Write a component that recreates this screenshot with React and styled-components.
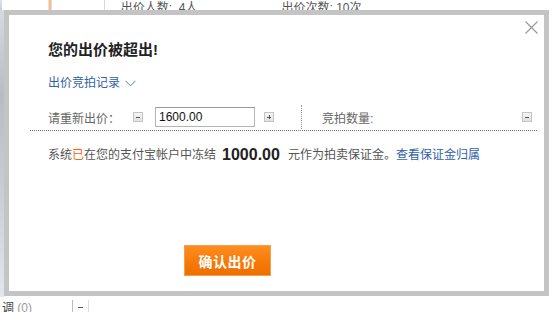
import React from "react";
import styled, { createGlobalStyle } from "styled-components";

const Global = createGlobalStyle`
  html, body { margin: 0; padding: 0; background: #fff; }
  body { font-family: "Liberation Sans", "Noto Sans CJK SC", sans-serif; }
`;

const Page = styled.div`
  position: relative;
  width: 558px;
  height: 312px;
  overflow: hidden;
  background: #fff;
  display: flex;
  flex-direction: column;
`;

const TopStats = styled.div`
  height: 10px;
  overflow: hidden;
  display: flex;
  align-items: flex-end;
  position: relative;
`;

const Edge = styled.div`
  width: 4px;
  align-self: stretch;
  background: linear-gradient(180deg, #dfe3e8, #c9ccd2);
`;

const Glow = styled.div`
  width: 10px;
  height: 10px;
  margin-left: 46px;
  background: linear-gradient(90deg, #f6efe4, #e9b47a, #f5e8d8);
`;

const VLine = styled.div`
  width: 1px;
  align-self: stretch;
  background: #d8d8d8;
  margin-left: ${(p) => p.$ml}px;
`;

const Stat = styled.span`
  font-size: 12px;
  line-height: 14px;
  color: #555;
  white-space: nowrap;
  margin-left: ${(p) => p.$ml}px;
  margin-bottom: -5px;
`;

const Middle = styled.div`
  flex: 1;
  display: flex;
`;

const LeftStrip = styled.div`
  width: 4px;
  background: linear-gradient(180deg, #d6dae0 0%, #b9bcc0 30%, #c8cbd0 60%, #e3e6ea 100%);
`;

const BottomBar = styled.div`
  height: 15px;
  overflow: hidden;
  display: flex;
  align-items: flex-start;
`;

const BottomText = styled.span`
  font-size: 12px;
  line-height: 14px;
  color: #444;
  margin-top: 4px;
  margin-left: 2px;
  white-space: nowrap;
`;

const Muted = styled.span`
  color: #999;
`;

const BottomBox = styled.div`
  margin-left: 40px;
  width: 17px;
  height: 20px;
  margin-top: 3px;
  border-left: 1px solid #bbb;
  border-right: 1px solid #ddd;
  display: flex;
  justify-content: center;
  padding-top: 7px;
  box-sizing: border-box;
  &::after {
    content: "";
    width: 5px;
    height: 1px;
    background: #555;
  }
`;

const Modal = styled.div`
  position: absolute;
  left: 4px;
  top: 10px;
  width: 545px;
  height: 286px;
  box-sizing: border-box;
  border: 5px solid #c4c4c4;
  background: #fff;
  display: flex;
  flex-direction: column;
  padding: 26px 7px 15px 21px;
`;

const Close = styled.button`
  position: absolute;
  right: 5px;
  top: 5px;
  width: 15px;
  height: 15px;
  padding: 0;
  border: 0;
  background: none;
  cursor: pointer;
  display: flex;
  align-items: center;
  justify-content: center;
`;

const Title = styled.h2`
  margin: 0;
  padding-left: 18px;
  font-size: 15px;
  line-height: 18px;
  font-weight: bold;
  color: #222;
`;

const RecordLink = styled.a`
  margin-top: 15px;
  padding-left: 18px;
  font-size: 12px;
  line-height: 18px;
  color: #2f62a6;
  text-decoration: none;
  display: flex;
  align-items: center;
  gap: 5px;
`;

const BidRow = styled.div`
  margin-top: 12px;
  height: 26px;
  padding: 0 5px 0 18px;
  border-bottom: 1px dotted #777;
  display: flex;
  align-items: center;
`;

const Label = styled.span`
  font-size: 12px;
  color: #666;
  white-space: nowrap;
  width: ${(p) => p.$w}px;
`;

const Step = styled.button`
  width: 10px;
  height: 10px;
  padding: 0;
  box-sizing: border-box;
  border: 1px solid #c4c4c4;
  background: linear-gradient(180deg, #f6f6f6, #e0e0e0);
  position: relative;
  margin-left: ${(p) => p.$ml || 0}px;
  &::before {
    content: "";
    position: absolute;
    left: 2px;
    top: 3.5px;
    width: 4px;
    height: 1px;
    background: #555;
  }
  &::after {
    content: "";
    display: ${(p) => (p.$plus ? "block" : "none")};
    position: absolute;
    left: 3.5px;
    top: 2px;
    width: 1px;
    height: 4px;
    background: #555;
  }
`;

const PriceInput = styled.input`
  width: 100px;
  height: 20px;
  box-sizing: border-box;
  margin-left: 12px;
  border: 1px solid #b5b5b5;
  border-top-color: #999;
  padding: 0 3px;
  font-family: "Liberation Sans", sans-serif;
  font-size: 12px;
  color: #111;
  outline: none;
`;

const Divider = styled.div`
  width: 0;
  height: 24px;
  border-left: 1px dotted #999;
  margin: 0 20px 0 27px;
`;

const Spacer = styled.div`
  flex: 1;
`;

const Notice = styled.p`
  margin: 14px 0 0;
  padding-left: 18px;
  font-size: 12px;
  line-height: 20px;
  color: #555;
  display: flex;
  align-items: center;
  white-space: nowrap;
`;

const Hi = styled.span`
  color: #f26a10;
`;

const Amount = styled.strong`
  font-family: "Liberation Sans", sans-serif;
  font-size: 16px;
  font-weight: bold;
  color: #222;
  margin: 0 8px 0 6px;
`;

const TextLink = styled.a`
  color: #2f62a6;
  text-decoration: none;
`;

const Footer = styled.div`
  margin-top: auto;
  padding-left: 154px;
  display: flex;
`;

const Confirm = styled.button`
  width: 87px;
  height: 31px;
  box-sizing: border-box;
  border: 1px solid #f0a050;
  background: linear-gradient(180deg, #ff8d1f 0%, #f57a0a 55%, #ee6f00 100%);
  color: #fff;
  font-family: "Noto Sans CJK SC", sans-serif;
  font-size: 14px;
  font-weight: bold;
  letter-spacing: 0.5px;
  padding: 0;
  cursor: pointer;
`;

export default function App() {
  return (
    <>
      <Global />
      <Page>
        <TopStats>
          <Edge />
          <Glow />
          <VLine $ml={52} />
          <Stat $ml={16}>出价人数:&nbsp;&nbsp;4人</Stat>
          <Stat $ml={84}>出价次数:&nbsp;10次</Stat>
          <VLine $ml={196} />
        </TopStats>
        <Middle>
          <LeftStrip />
        </Middle>
        <BottomBar>
          <BottomText>
            调 <Muted>(0)</Muted>
          </BottomText>
          <BottomBox />
        </BottomBar>

        <Modal>
          <Close aria-label="关闭">
            <svg width="13" height="13" viewBox="0 0 13 13">
              <path d="M0.5 0.5 L12.5 12.5 M12.5 0.5 L0.5 12.5" stroke="#9a9a9a" strokeWidth="1.2" fill="none" />
            </svg>
          </Close>
          <Title>您的出价被超出!</Title>
          <RecordLink href="#">
            出价竞拍记录
            <svg width="11" height="7" viewBox="0 0 11 7">
              <path d="M0.5 0.8 L5.5 5.8 L10.5 0.8" stroke="#5a7fb5" strokeWidth="1" fill="none" />
            </svg>
          </RecordLink>
          <BidRow>
            <Label $w={85}>请重新出价：</Label>
            <Step aria-label="减少" />
            <PriceInput defaultValue="1600.00" />
            <Step $plus $ml={9} aria-label="增加" />
            <Divider />
            <Label>竞拍数量:</Label>
            <Spacer />
            <Step aria-label="减少数量" />
          </BidRow>
          <Notice>
            系统<Hi>已</Hi>在您的支付宝帐户中冻结
            <Amount>1000.00</Amount>
            元作为拍卖保证金。
            <TextLink href="#">查看保证金归属</TextLink>
          </Notice>
          <Footer>
            <Confirm>确认出价</Confirm>
          </Footer>
        </Modal>
      </Page>
    </>
  );
}
